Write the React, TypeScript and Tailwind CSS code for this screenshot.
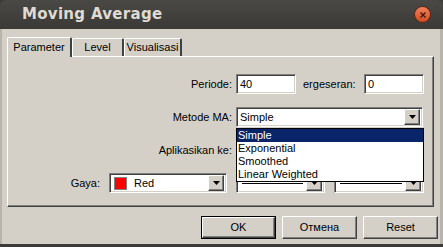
import React from 'react';

const sunken =
  'border border-t-[#808080] border-l-[#808080] border-b-white border-r-white shadow-[inset_1px_1px_0_#404040,inset_-1px_-1px_0_#d4d0c8] bg-white';
const raised =
  'border border-t-white border-l-white border-b-[#404040] border-r-[#404040] shadow-[inset_-1px_-1px_0_#808080] bg-[#d4d0c8]';

function Arrow() {
  return (
    <div className={`w-[16px] h-[16px] flex items-center justify-center shrink-0 ${raised}`}>
      <svg width="7" height="4" viewBox="0 0 7 4">
        <path d="M0 0h7L3.5 4z" fill="#000" />
      </svg>
    </div>
  );
}

function Combo({ width, children }: { width: string; children?: React.ReactNode }) {
  return (
    <div className={`${width} h-[20px] flex items-center p-[2px] ${sunken}`}>
      <div className="flex-1 flex items-center h-full overflow-hidden">{children}</div>
      <Arrow />
    </div>
  );
}

function Button({ label, isDefault }: { label: string; isDefault?: boolean }) {
  return (
    <div className={`w-[75px] h-[23px] ${isDefault ? 'border border-black' : ''}`}>
      <div className={`w-full h-full flex items-center justify-center ${raised}`}>{label}</div>
    </div>
  );
}

export default function App() {
  const items = ['Simple', 'Exponential', 'Smoothed', 'Linear Weighted'];

  return (
    <div
      className="w-[443px] h-[247px] bg-[#3c3b37] overflow-hidden flex flex-col text-[11px] text-black"
      style={{ fontFamily: '"Liberation Sans", Arial, sans-serif' }}
    >
      {/* title bar */}
      <div className="h-[29px] shrink-0 rounded-t-[6px] bg-gradient-to-b from-[#4a4945] to-[#3a3935] flex items-center justify-between pl-[22px] pr-[13px]">
        <span
          className="text-[15px] font-bold text-[#dfdbd2] tracking-[0.3px]"
          style={{ fontFamily: '"DejaVu Sans", sans-serif' }}
        >
          Moving Average
        </span>
        <div className="w-[15px] h-[15px] rounded-full bg-gradient-to-b from-[#f4805a] to-[#d44a1c] shadow-[0_0_0_1px_#5a2a18] flex items-center justify-center">
          <svg width="6" height="6" viewBox="0 0 6 6">
            <path d="M0.5 0.5L5.5 5.5M5.5 0.5L0.5 5.5" stroke="#3a1a0e" strokeWidth="1.3" />
          </svg>
        </div>
      </div>

      {/* body */}
      <div className="h-[215px] shrink-0 bg-[#d4d0c8] border-l-2 border-l-[#b8b4ac] border-r-[3px] border-r-[#b8b4ac] pl-[5px] pr-[2px] pt-[7px]">
        {/* tabs */}
        <div className="flex items-end h-[20px]">
          <div className="w-[65px] h-[20px] border-t border-l border-white border-r-2 border-r-[#404040] rounded-t-[2px] flex items-center justify-center pb-[1px] bg-[#d4d0c8] relative z-10 -mb-[1px]">
            Parameter
          </div>
          <div className="w-[52px] h-[18px] border-t border-l border-white border-r-2 border-r-[#404040] rounded-t-[2px] flex items-center justify-center">
            Level
          </div>
          <div className="w-[58px] h-[18px] border-t border-l border-white border-r-2 border-r-[#404040] rounded-t-[2px] flex items-center justify-center">
            Visualisasi
          </div>
        </div>

        {/* panel */}
        <div className="w-[427px] h-[151px] relative border border-t-white border-l-white border-b-[#404040] border-r-[#404040] shadow-[inset_-1px_-1px_0_#808080] pt-[17px] flex flex-col gap-[13px]">
          <div className="flex items-center h-[20px]">
            <span className="w-[228px] text-right pr-[4px]">Periode:</span>
            <div className={`w-[60px] h-[20px] flex items-center pl-[3px] ${sunken}`}>40</div>
            <span className="w-[61px] ml-[7px]">ergeseran:</span>
            <div className={`w-[60px] h-[20px] flex items-center pl-[3px] ${sunken}`}>0</div>
          </div>

          <div className="flex items-center h-[20px]">
            <span className="w-[228px] text-right pr-[4px]">Metode MA:</span>
            <Combo width="w-[187px]">
              <span className="pl-[1px]">Simple</span>
            </Combo>
          </div>

          <div className="flex items-center h-[20px]">
            <span className="w-[228px] text-right pr-[4px]">Aplikasikan ke:</span>
            <Combo width="w-[187px]" />
          </div>

          <div className="flex items-center h-[20px]">
            <span className="w-[97px] text-right pr-[5px]">Gaya:</span>
            <div className="ml-[4px]">
              <Combo width="w-[118px]">
                <span className="w-[13px] h-[13px] bg-[#ff0000] border border-[#808080] ml-[2px] shrink-0" />
                <span className="ml-[7px]">Red</span>
              </Combo>
            </div>
            <div className="ml-[9px]">
              <Combo width="w-[89px]">
                <span className="w-full h-px bg-black mx-[3px]" />
              </Combo>
            </div>
            <div className="ml-[9px]">
              <Combo width="w-[90px]">
                <span className="w-full h-px bg-black mx-[3px]" />
              </Combo>
            </div>
          </div>

          {/* open dropdown list */}
          <div className="absolute left-[228px] top-[71px] w-[188px] h-[54px] bg-white border border-black flex flex-col z-20">
            {items.map((it, i) => (
              <div
                key={it}
                className={`h-[13px] leading-[13px] pl-[1px] ${i === 0 ? 'bg-[#0a246a] text-white' : ''}`}
              >
                {it}
              </div>
            ))}
          </div>
        </div>

        {/* buttons */}
        <div className="flex justify-end gap-[6px] mt-[9px]">
          <Button label="OK" isDefault />
          <Button label="Отмена" />
          <Button label="Reset" />
        </div>
      </div>
    </div>
  );
}
